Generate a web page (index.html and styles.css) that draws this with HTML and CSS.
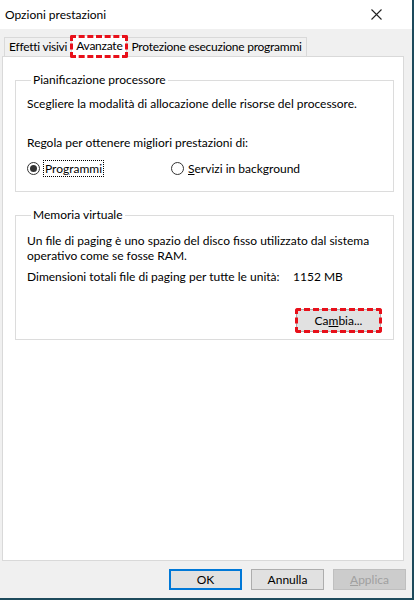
FILE: index.html
```html
<!DOCTYPE html>
<html>
<head>
<meta charset="utf-8">
<link rel="stylesheet" href="styles.css">
</head>
<body>
<div class="window">
  <div class="titlebar">
    <span class="title">Opzioni prestazioni</span>
    <svg class="close" width="11" height="11" viewBox="0 0 11 11"><path d="M0.5 0.5 L10.5 10.5 M10.5 0.5 L0.5 10.5" stroke="#222" stroke-width="1.1" fill="none"/></svg>
  </div>
  <div class="content">
    <div class="tabs">
      <div class="tab">Effetti visivi</div>
      <div class="tab active"><span class="mark">Avanzate</span></div>
      <div class="tab">Protezione esecuzione programmi</div>
    </div>
    <div class="panel">
      <fieldset class="group g1">
        <legend>Pianificazione processore</legend>
        <p class="line l1">Scegliere la modalità di allocazione delle risorse del processore.</p>
        <p class="line l2">Regola per ottenere migliori prestazioni di:</p>
        <div class="radios">
          <div class="radio r1"><span class="dot checked"></span><span class="focus">Pro<u>g</u>rammi</span></div>
          <div class="radio r2"><span class="dot"></span><span class="lbl"><u>S</u>ervizi in background</span></div>
        </div>
      </fieldset>
      <fieldset class="group g2">
        <legend>Memoria virtuale</legend>
        <p class="line m1">Un file di paging è uno spazio del disco fisso utilizzato dal sistema<br>operativo come se fosse RAM.</p>
        <div class="line m2"><span class="lab">Dimensioni totali file di paging per tutte le unità:</span><span class="val">1152 MB</span></div>
        <div class="btnrow"><div class="btn cambia">Ca<u>m</u>bia...</div></div>
      </fieldset>
    </div>
    <div class="footer">
      <div class="btn ok">OK</div>
      <div class="btn">Annulla</div>
      <div class="btn disabled"><u>A</u>pplica</div>
    </div>
  </div>
</div>
</body>
</html>
```
FILE: styles.css
```css
* { box-sizing: border-box; }
html, body { margin: 0; padding: 0; }
body { width: 414px; height: 600px; overflow: hidden; font-family: "Lato", "Liberation Sans", sans-serif; font-size: 12px; color: #000; }
.window { width: 414px; height: 600px; border-right: 2px solid #1d4a5c; border-bottom: 2px solid #1d4a5c; background: #f0f0f0; display: flex; flex-direction: column; }
.titlebar { height: 29px; background: #fff; display: flex; align-items: center; justify-content: space-between; padding: 0 30px 0 5px; flex: none; }
.content { flex: 1; display: flex; flex-direction: column; padding: 0 8px 0 2px; }
.tabs { display: flex; align-items: flex-end; height: 27px; padding-left: 2px; position: relative; z-index: 1; }
.tab { height: 19px; border: 1px solid #d9d9d9; border-bottom: none; background: #f0f0f0; padding: 0 4px; line-height: 17px; white-space: nowrap; letter-spacing: -0.25px; }
.tab + .tab { margin-left: -1px; }
.tab.active { background: #fff; height: 22px; margin-bottom: -1px; padding: 0 4px; position: relative; line-height: 19px; }
.mark { display: block; }
.tab.active::after { content: ""; position: absolute; left: -2px; right: -2px; top: -1px; bottom: -1px; border: 3px dashed #e8101a; border-radius: 2px; }
.panel { background: #fff; border: 1px solid #d9d9d9; height: 505px; padding: 16px 9px 0 12px; display: flex; flex-direction: column; gap: 16px; }
.group { margin: 0; border: 1px solid #dcdcdc; padding: 0 10px 0 11px; flex: none; }
.group legend { padding: 0 2px; margin-left: 4px; line-height: 14px; }
.g1 { height: 119px; }
.g2 { height: 132px; }
.line { margin: 0; line-height: 15px; white-space: nowrap; }
.l1 { margin-top: 9px; }
.l2 { margin-top: 24px; }
.radios { display: flex; margin-top: 10px; }
.radio { display: flex; align-items: center; height: 17px; }
.r1 { width: 144px; }
.dot { width: 13px; height: 13px; border: 1px solid #333; border-radius: 50%; background: #fff; position: relative; margin-right: 3px; flex: none; }
.dot.checked::after { content: ""; position: absolute; left: 2px; top: 2px; width: 7px; height: 7px; border-radius: 50%; background: #333; }
.focus { border: 1px dotted #000; padding: 0 1px; line-height: 15px; }
.lbl { padding-left: 1px; }
.m1 { margin-top: 11px; }
.m2 { margin-top: 6px; display: flex; }
.lab { width: 266px; flex: none; }
.btnrow { display: flex; justify-content: flex-end; margin-top: 25px; padding-right: 2px; }
.btn { width: 75px; height: 23px; border: 1px solid #adadad; background: #e1e1e1; display: flex; align-items: center; justify-content: center; }
.cambia { width: 85px; height: 23px; position: relative; }
.cambia::after { content: ""; position: absolute; left: -2px; right: -2px; top: -2px; bottom: -2px; border: 3px dashed #e8101a; border-radius: 3px; }
.footer { display: flex; justify-content: flex-end; gap: 9px; margin-top: 8px; margin-right: -2px; }
.footer .btn { width: 73px; height: 21px; }
.btn.ok { border: 2px solid #0078d7; }
.btn.disabled { background: #cccccc; border-color: #bfbfbf; color: #a0a0a0; }
```
